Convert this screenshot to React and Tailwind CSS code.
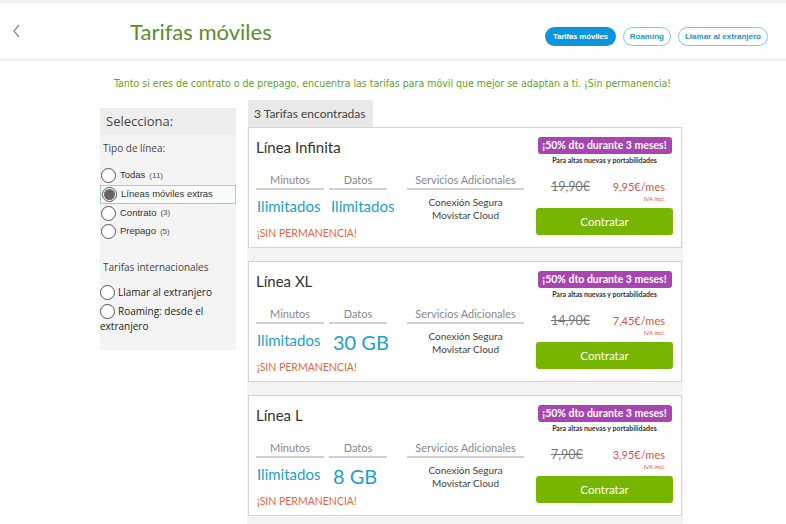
import React from "react";

const tarifas = [
  { name: "Línea Infinita", datos: "Ilimitados", big: false, old: "19,90€", price: "9,95€/mes" },
  { name: "Línea XL", datos: "30 GB", big: true, old: "14,90€", price: "7,45€/mes" },
  { name: "Línea L", datos: "8 GB", big: true, old: "7,90€", price: "3,95€/mes" },
];

const Radio = ({ checked }) => (
  <span className="w-[15px] h-[15px] rounded-full border border-[#555] bg-white flex items-center justify-center shrink-0">
    {checked && <span className="w-[11px] h-[11px] rounded-full bg-[#666]" />}
  </span>
);

const TarifaCard = ({ t }) => (
  <div className="bg-white border border-[#d4d4d4] h-[121px] flex pl-[7px] pr-[8px] pt-[9px] font-['Lato',sans-serif]">
    <div className="flex-1 flex flex-col">
      <div className="text-[15px] leading-[20px] text-[#333]">{t.name}</div>
      <div className="flex mt-[14px]">
        <div className="w-[68px] text-center text-[11px] leading-[17px] text-[#888] border-b-2 border-[#d0d0d0]">Minutos</div>
        <div className="w-[58px] ml-[5px] text-center text-[11px] leading-[17px] text-[#888] border-b-2 border-[#d0d0d0]">Datos</div>
        <div className="w-[117px] ml-[20px] text-center text-[11px] leading-[17px] text-[#888] border-b-2 border-[#d0d0d0]">Servicios Adicionales</div>
      </div>
      <div className="flex mt-[3px] h-[30px]">
        <div className="w-[68px] text-[15px] leading-[26px] text-[#1c9fca] pl-[1px]">Ilimitados</div>
        <div className={`w-[58px] ml-[5px] text-[#1c9fca] whitespace-nowrap ${t.big ? "text-[20px] leading-[30px] pl-[4px]" : "text-[15px] leading-[26px] pl-[2px]"}`}>{t.datos}</div>
        <div className="w-[117px] ml-[20px] text-center text-[10px] leading-[13px] text-[#444] pt-[3px]">
          <div>Conexión Segura</div>
          <div>Movistar Cloud</div>
        </div>
      </div>
      <div className="text-[10.5px] leading-[14px] text-[#e4683f] mt-[3px] pl-[1px]">¡SIN PERMANENCIA!</div>
    </div>
    <div className="w-[137px] flex flex-col items-center">
      <div className="w-[134px] h-[17px] rounded-[3px] bg-[#a845b0] text-white text-[10.5px] font-bold leading-[17px] text-center">¡50% dto durante 3 meses!</div>
      <div className="text-[7px] leading-[11px] text-[#333] mt-[1px] font-bold">Para altas nuevas y portabilidades</div>
      <div className="w-full flex justify-between items-start mt-[13px] pl-[15px] pr-[8px]">
        <span className="text-[12.5px] leading-[16px] text-[#777] line-through">{t.old}</span>
        <div className="flex flex-col items-end">
          <span className="text-[11px] leading-[16px] text-[#d9534f]">{t.price}</span>
          <span className="text-[6px] leading-[8px] text-[#d9534f]">IVA incl.</span>
        </div>
      </div>
      <button className="mt-[5px] w-[137px] h-[27px] rounded-[3px] bg-[#76b600] text-white text-[11.5px]">Contratar</button>
    </div>
  </div>
);

export default function App() {
  return (
    <div className="w-[786px] h-[524px] overflow-hidden bg-white font-['Open_Sans',sans-serif]">
      <div className="h-[3px] bg-[#f1f1f1]" />
      {/* Header */}
      <div className="h-[55px] flex items-center">
        <span className="w-[130px] pl-[12px] text-[#888]">
          <svg width="9" height="14" viewBox="0 0 9 14" fill="none">
            <path d="M7 1 L2 7 L7 13" stroke="#888" strokeWidth="1.2" />
          </svg>
        </span>
        <h1 className="text-[22px] text-[#5d8d2c] font-['Lato',sans-serif] leading-[28px] mt-[2px]">Tarifas móviles</h1>
        <div className="ml-auto mr-[18px] flex gap-[7px] mt-[12px] font-['Liberation_Sans',sans-serif]">
          <span className="h-[19px] px-[8px] rounded-full bg-[#0b95dd] text-white text-[8px] font-bold leading-[19px] tracking-[-0.2px]">Tarifas móviles</span>
          <span className="h-[19px] px-[6px] rounded-full border border-[#7cc8e2] text-[#1b95c9] text-[8px] font-bold leading-[17px]">Roaming</span>
          <span className="h-[19px] px-[6px] rounded-full border border-[#7cc8e2] text-[#1b95c9] text-[8px] font-bold leading-[17px]">Llamar al extranjero</span>
        </div>
      </div>
      <div className="h-[3px] bg-[#f1f1f1]" />

      <p className="mt-[15px] text-[10.5px] text-[#5da42a] leading-[14px] font-['DejaVu_Sans_Condensed','DejaVu_Sans',sans-serif] pl-[114px]">
        Tanto si eres de contrato o de prepago, encuentra las tarifas para móvil que mejor se adaptan a ti. ¡Sin permanencia!
      </p>

      <div className="flex mt-[10px] pl-[100px]">
        {/* Sidebar */}
        <div className="w-[136px] h-[242px] mt-[8px] bg-[#f4f4f4] flex flex-col">
          <div className="h-[27px] bg-[#eeeeee] pl-[6px] text-[13px] leading-[27px] text-[#444]">Selecciona:</div>
          <div className="text-[10px] text-[#444] mt-[6px] pl-[3px] leading-[14px]">Tipo de línea:</div>
          <div className="flex flex-col mt-[11px] text-[9.5px] text-[#333] font-['Liberation_Sans',sans-serif]">
            <label className="flex items-center gap-[4px] h-[19px] pl-[1px]"><Radio /> Todas <span className="text-[8px] text-[#555]">(11)</span></label>
            <label className="flex items-center gap-[4px] h-[19px] pl-[1px] bg-[#f8fbfb] border border-[#9fd0d0]"><Radio checked /> Líneas móviles extras</label>
            <label className="flex items-center gap-[4px] h-[18px] pl-[1px]"><Radio /> Contrato <span className="text-[8px] text-[#555]">(3)</span></label>
            <label className="flex items-center gap-[4px] h-[19px] pl-[1px]"><Radio /> Prepago <span className="text-[8px] text-[#555]">(5)</span></label>
          </div>
          <div className="text-[10px] text-[#444] mt-[19px] pl-[3px] leading-[14px]">Tarifas internacionales</div>
          <div className="flex flex-col mt-[9px] text-[10px] text-[#222]">
            <label className="flex items-center gap-[3px] h-[19px]"><Radio /> Llamar al extranjero</label>
            <label className="flex items-center gap-[3px] h-[19px]"><Radio /> Roaming: desde el</label>
            <span className="leading-[11px]">extranjero</span>
          </div>
        </div>

        {/* Results */}
        <div className="ml-[11px] w-[436px] flex flex-col">
          <div className="w-[125px] h-[27px] bg-[#e9e9e9] ml-[1px] text-[12px] leading-[27px] text-[#444] pl-[6px] whitespace-nowrap font-['Lato',sans-serif]">3 Tarifas encontradas</div>
          <div className="bg-[#f3f3f3] flex flex-col gap-[13px] pb-[14px] pl-[1px] pr-[1px]">
            {tarifas.map((t) => (
              <TarifaCard key={t.name} t={t} />
            ))}
          </div>
        </div>
      </div>
    </div>
  );
}
